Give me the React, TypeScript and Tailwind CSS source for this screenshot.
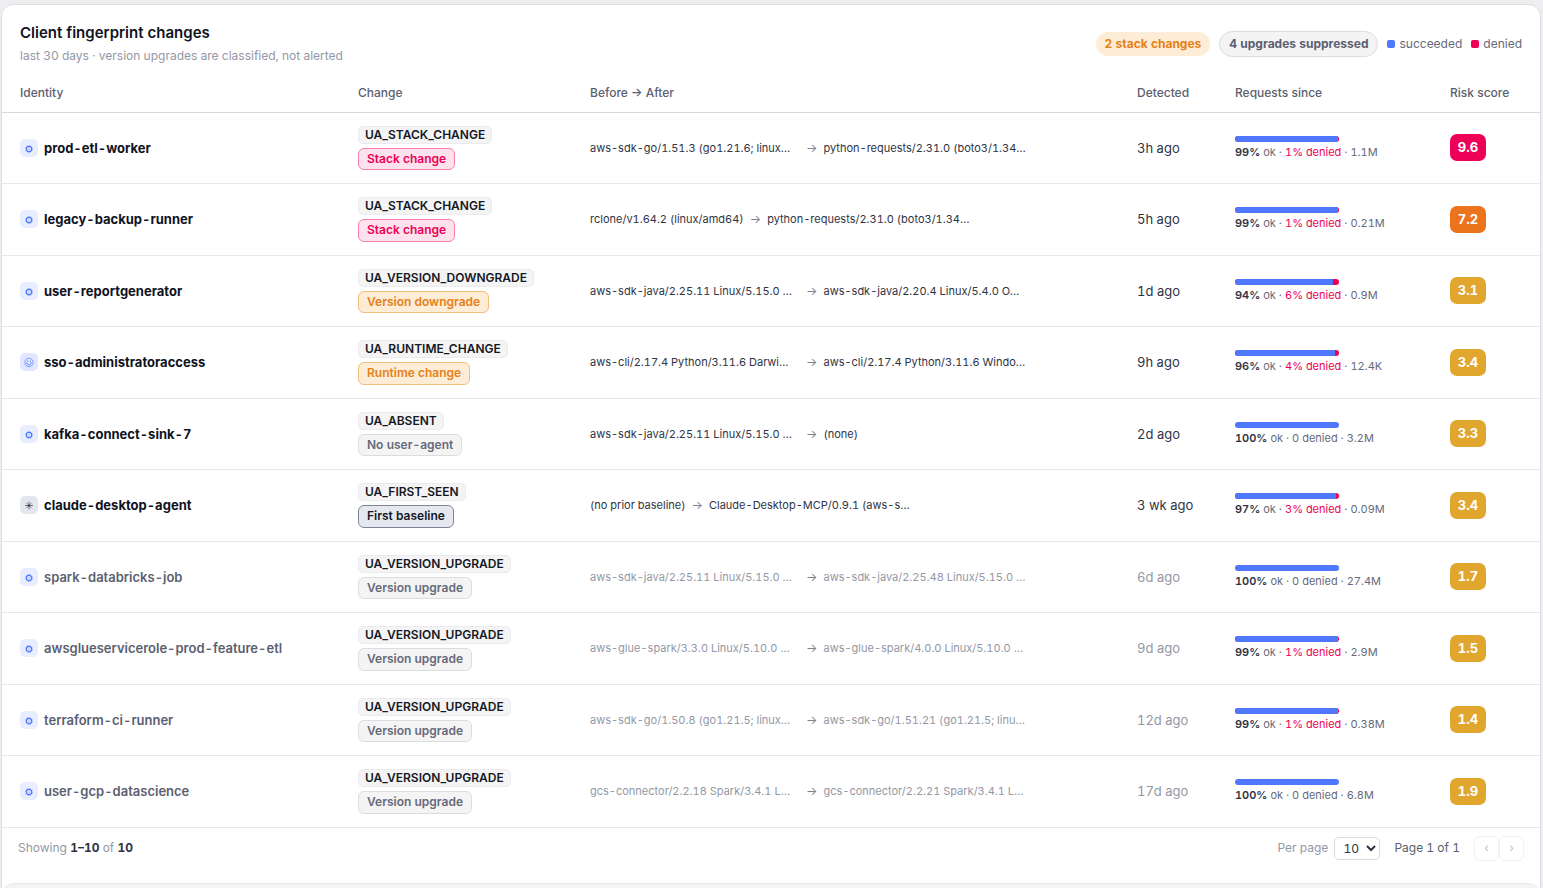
type Tone = 'pink' | 'orange' | 'gray' | 'slate';
type Kind = 'service' | 'user' | 'agent';

interface Row {
  name: string;
  kind: Kind;
  code: string;
  label: string;
  tone: Tone;
  before: string;
  after: string;
  detected: string;
  ok: number;
  total: string;
  risk: string;
  muted?: boolean;
}

const rows: Row[] = [
  { name: 'prod-etl-worker', kind: 'service', code: 'UA_STACK_CHANGE', label: 'Stack change', tone: 'pink', before: 'aws-sdk-go/1.51.3 (go1.21.6; linux…', after: 'python-requests/2.31.0 (boto3/1.34…', detected: '3h ago', ok: 99, total: '1.1M', risk: '9.6' },
  { name: 'legacy-backup-runner', kind: 'service', code: 'UA_STACK_CHANGE', label: 'Stack change', tone: 'pink', before: 'rclone/v1.64.2 (linux/amd64)', after: 'python-requests/2.31.0 (boto3/1.34…', detected: '5h ago', ok: 99, total: '0.21M', risk: '7.2' },
  { name: 'user-reportgenerator', kind: 'service', code: 'UA_VERSION_DOWNGRADE', label: 'Version downgrade', tone: 'orange', before: 'aws-sdk-java/2.25.11 Linux/5.15.0 …', after: 'aws-sdk-java/2.20.4 Linux/5.4.0 O…', detected: '1d ago', ok: 94, total: '0.9M', risk: '3.1' },
  { name: 'sso-administratoraccess', kind: 'user', code: 'UA_RUNTIME_CHANGE', label: 'Runtime change', tone: 'orange', before: 'aws-cli/2.17.4 Python/3.11.6 Darwi…', after: 'aws-cli/2.17.4 Python/3.11.6 Windo…', detected: '9h ago', ok: 96, total: '12.4K', risk: '3.4' },
  { name: 'kafka-connect-sink-7', kind: 'service', code: 'UA_ABSENT', label: 'No user-agent', tone: 'gray', before: 'aws-sdk-java/2.25.11 Linux/5.15.0 …', after: '(none)', detected: '2d ago', ok: 100, total: '3.2M', risk: '3.3' },
  { name: 'claude-desktop-agent', kind: 'agent', code: 'UA_FIRST_SEEN', label: 'First baseline', tone: 'slate', before: '(no prior baseline)', after: 'Claude-Desktop-MCP/0.9.1 (aws-s…', detected: '3 wk ago', ok: 97, total: '0.09M', risk: '3.4' },
  { name: 'spark-databricks-job', kind: 'service', code: 'UA_VERSION_UPGRADE', label: 'Version upgrade', tone: 'gray', before: 'aws-sdk-java/2.25.11 Linux/5.15.0 …', after: 'aws-sdk-java/2.25.48 Linux/5.15.0 …', detected: '6d ago', ok: 100, total: '27.4M', risk: '1.7', muted: true },
  { name: 'awsglueservicerole-prod-feature-etl', kind: 'service', code: 'UA_VERSION_UPGRADE', label: 'Version upgrade', tone: 'gray', before: 'aws-glue-spark/3.3.0 Linux/5.10.0 …', after: 'aws-glue-spark/4.0.0 Linux/5.10.0 …', detected: '9d ago', ok: 99, total: '2.9M', risk: '1.5', muted: true },
  { name: 'terraform-ci-runner', kind: 'service', code: 'UA_VERSION_UPGRADE', label: 'Version upgrade', tone: 'gray', before: 'aws-sdk-go/1.50.8 (go1.21.5; linux…', after: 'aws-sdk-go/1.51.21 (go1.21.5; linu…', detected: '12d ago', ok: 99, total: '0.38M', risk: '1.4', muted: true },
  { name: 'user-gcp-datascience', kind: 'service', code: 'UA_VERSION_UPGRADE', label: 'Version upgrade', tone: 'gray', before: 'gcs-connector/2.2.18 Spark/3.4.1 L…', after: 'gcs-connector/2.2.21 Spark/3.4.1 L…', detected: '17d ago', ok: 100, total: '6.8M', risk: '1.9', muted: true },
];

const tones: Record<Tone, string> = {
  pink: 'border-[#f57fae] bg-[#fde1ec] text-[#ec0056]',
  orange: 'border-[#f3bd7c] bg-[#fdecd6] text-[#e58119]',
  gray: 'border-[#dcdcde] bg-[#f4f4f5] text-[#666a7a]',
  slate: 'border-[#7f8496] bg-[#e6e8f0] text-[#141824]',
};

const kindColors: Record<Kind, string> = {
  service: 'bg-[#e8edff] text-[#5078ff]',
  user: 'bg-[#e0e7ff] text-[#5078ff]',
  agent: 'bg-[#e4e6ee] text-[#1c202c]',
};

function KindIcon({ kind }: { kind: Kind }) {
  return (
    <span className={`flex size-[18px] shrink-0 items-center justify-center rounded-[5px] ${kindColors[kind]}`}>
      <svg viewBox="0 0 18 18" className="size-[18px]" fill="none" stroke="currentColor" aria-hidden="true">
        {kind === 'service' && (
          <>
            <circle cx="9" cy="10" r="2.6" strokeWidth="1.1" />
            <circle cx="9" cy="10" r="3.4" strokeWidth="0.7" strokeDasharray="1.34 1.33" />
            <circle cx="9" cy="10" r="0.6" fill="currentColor" stroke="none" />
          </>
        )}
        {kind === 'user' && (
          <>
            <circle cx="9" cy="9.5" r="4.2" strokeWidth="0.7" />
            <path d="M7.6 7.5v1.3M10.4 7.5v1.3M6.7 9.4c.2 3.2 4.4 3.2 4.6 0" strokeWidth="0.9" />
          </>
        )}
        {kind === 'agent' && (
          <>
            <path d="M9 5.6v7.8M5.1 9.5h7.8" strokeWidth="0.6" />
            <path d="M6.3 6.8l5.4 5.4M11.7 6.8l-5.4 5.4" strokeWidth="0.5" />
            <circle cx="9" cy="9.5" r="0.8" fill="currentColor" stroke="none" />
          </>
        )}
      </svg>
    </span>
  );
}

function Agent({ text }: { text: string }) {
  return <span className={text.endsWith('…') ? 'w-[210px]' : undefined}>{text}</span>;
}

function riskColor(risk: number) {
  if (risk >= 9) return 'bg-[#ee0056]';
  if (risk >= 7) return 'bg-[#eb731c]';
  return 'bg-[#e1a62d]';
}

function ChangeRow({ row }: { row: Row }) {
  const denied = 100 - row.ok;
  return (
    <tr className="border-b border-[#e8e8ea]">
      <td className="px-[18px]">
        <div className="flex items-center gap-1.5">
          <KindIcon kind={row.kind} />
          <span className={`text-[13px] leading-5 ${row.muted ? 'font-semibold text-[#5b6070]' : 'font-bold text-[#0f131e]'}`}>{row.name}</span>
        </div>
      </td>
      <td className="px-[18px] py-[13px]">
        <div className="flex flex-col items-start gap-1">
          <code className="rounded-[5px] border border-[#ebebed] bg-[#f4f4f5] px-1.5 font-[Inter,sans-serif] text-[12px] leading-4 font-semibold text-[#141824]">{row.code}</code>
          <span className={`rounded-md border px-2 py-0.5 text-[12px] leading-snug font-semibold ${tones[row.tone]}`}>{row.label}</span>
        </div>
      </td>
      <td className="px-[18px]">
        <div className={`flex items-center gap-1.5 text-[11px] leading-4 whitespace-nowrap ${row.muted ? 'text-[#9498a5]' : 'text-[#2f3444]'}`}>
          <Agent text={row.before} />
          <span className="text-[12px] text-[#7d8190]">→</span>
          <Agent text={row.after} />
        </div>
      </td>
      <td className={`px-[18px] text-[13px] leading-5 whitespace-nowrap ${row.muted ? 'text-[#9498a5]' : 'text-[#2f3444]'}`}>{row.detected}</td>
      <td className="px-[18px] whitespace-nowrap">
        <div className="mb-0.5 flex h-1.5 w-[104px] overflow-hidden rounded-full bg-[#ee0056]">
          <div className="bg-[#5078ff]" style={{ width: `${row.ok}%` }} />
        </div>
        <div className="text-[11px] leading-4 text-[#666a7a]">
          <b className="font-semibold text-[#2f3444]">{row.ok}%</b> ok ·{' '}
          {denied > 0 ? <span className="text-[#ee0056]">{denied}% denied</span> : '0 denied'} · {row.total}
        </div>
      </td>
      <td className="px-[18px]">
        <span className={`inline-flex h-[27px] w-9 items-center justify-center rounded-[7px] text-[13px] font-bold text-white ${riskColor(Number(row.risk))}`}>{row.risk}</span>
      </td>
    </tr>
  );
}

export default function App() {
  return (
    <div className="h-screen overflow-hidden bg-[#eeeef1] pt-1 pr-0.5 pl-px font-[Inter,sans-serif] tabular-nums">
      <main className="min-h-screen rounded-t-xl border border-[#dedee2] bg-white">
        <header className="flex items-center justify-between px-[18px] pt-[17px] pb-[9px]">
          <div>
            <h1 className="text-[15px] leading-[22px] font-semibold text-[#0f131e]">Client fingerprint changes</h1>
            <p className="mt-[3px] text-[12px] leading-[18px] text-[#9498a5]">last 30 days · version upgrades are classified, not alerted</p>
          </div>
          <div className="flex items-center gap-[9px]">
            <span className="rounded-full bg-[#fdecd6] px-[9px] py-[3px] text-[12px] leading-[18px] font-bold text-[#e58119]">2 stack changes</span>
            <span className="rounded-full border border-[#dcdcde] bg-[#f4f4f5] px-[9px] py-[3px] text-[12px] leading-[18px] font-bold text-[#5b6070]">4 upgrades suppressed</span>
            <span className="flex items-center gap-1 text-[12px] text-[#666a7a]"><i className="size-2 rounded-[2px] bg-[#5078ff]" />succeeded</span>
            <span className="flex items-center gap-1 text-[12px] text-[#666a7a]"><i className="size-2 rounded-[2px] bg-[#ee0056]" />denied</span>
          </div>
        </header>
        <table className="w-full table-fixed text-left">
          <colgroup>
            <col className="w-[338px]" />
            <col className="w-[232px]" />
            <col />
            <col className="w-[98px]" />
            <col className="w-[215px]" />
            <col className="w-[108px]" />
          </colgroup>
          <thead>
            <tr className="h-[38px] border-b border-[#d9d9dc] text-[12px] leading-[18px] whitespace-nowrap text-[#5b6070] *:px-[18px] *:font-medium">
              <th>Identity</th>
              <th>Change</th>
              <th>Before → After</th>
              <th>Detected</th>
              <th>Requests since</th>
              <th>Risk score</th>
            </tr>
          </thead>
          <tbody>
            {rows.map((row) => (
              <ChangeRow key={row.name} row={row} />
            ))}
          </tbody>
        </table>
        <footer className="flex items-center justify-between px-4 py-2 text-[12px] leading-[18px] text-[#9498a5]">
          <p>
            Showing <b className="font-bold text-[#2f3444]">1–10</b> of <b className="font-bold text-[#2f3444]">10</b>
          </p>
          <div className="flex items-center">
            <label htmlFor="per-page">Per page</label>
            <select id="per-page" className="mr-3.5 ml-1.5 h-[23px] w-[46px] rounded-[5px] border border-[#dcdcde] bg-white pl-1 text-[12px] text-[#2f3444]">
              <option>10</option>
            </select>
            <span className="mr-3.5 text-[#5b6070]">Page 1 of 1</span>
            <button type="button" disabled aria-label="Previous page" className="h-[25px] w-[25px] rounded-md border border-[#f1f1f2] text-[#bcbfc7]">‹</button>
            <button type="button" disabled aria-label="Next page" className="h-[25px] w-[25px] rounded-md border border-[#f1f1f2] text-[#bcbfc7]">›</button>
          </div>
        </footer>
        <div className="mt-3.5 h-10 rounded-t-xl border-t border-[#e8e8ea] bg-[#f4f4f5]" />
      </main>
    </div>
  );
}
